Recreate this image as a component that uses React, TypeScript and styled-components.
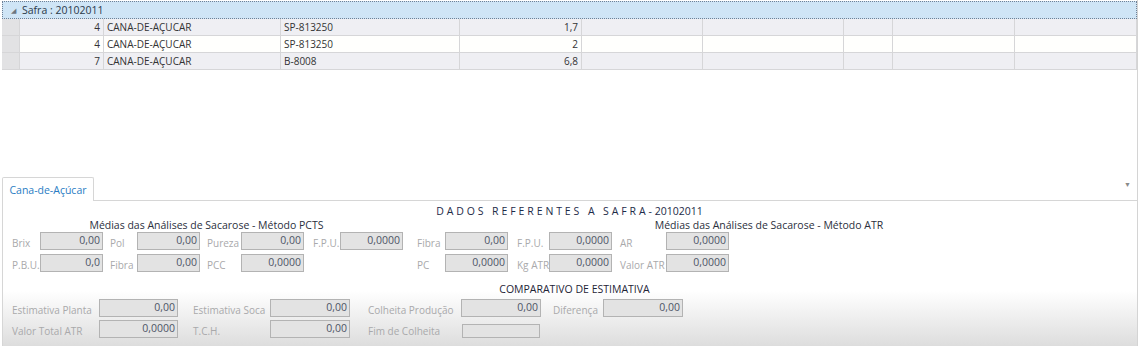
import React from 'react';
import styled, { createGlobalStyle } from 'styled-components';

const GlobalStyle = createGlobalStyle`
  html, body {
    margin: 0;
    padding: 0;
    background: #ffffff;
  }
  body {
    font-family: 'Open Sans', 'Noto Sans', sans-serif;
    font-size: 10px;
  }
`;

const Screen = styled.div`
  width: 1142px;
  height: 346px;
  display: flex;
  overflow: hidden;
  background: #ffffff;
`;

const Main = styled.div`
  width: 1137px;
  display: flex;
  flex-direction: column;
  border-right: 1px solid #d4d4d4;
`;

const Grid = styled.div`
  height: 174px;
  padding: 1px 0 0 2px;
  box-sizing: border-box;
`;

const GroupRow = styled.div`
  height: 16px;
  display: flex;
  align-items: center;
  gap: 6px;
  padding-left: 8px;
  background: #cfe5f6;
  border: 1px dotted #6f8196;
  font-size: 10.5px;
  color: #2b3a4a;
`;

const Caret = styled.span`
  font-size: 7px;
  color: #6d7680;
`;

const cols = '18px 84px 177px 179px 122px 121px 141px 49px 122px 1fr';

const Row = styled.div<{ $alt?: boolean }>`
  display: grid;
  grid-template-columns: ${cols};
  height: 17px;
  background: ${(p) => (p.$alt ? '#fffffd' : '#efeff3')};
  border-bottom: 1px solid #d6d6d8;
  box-sizing: border-box;
`;

const Indicator = styled.div`
  background: #e2e2e4;
  border-right: 1px solid #d6d6d8;
`;

const Cell = styled.div<{ $right?: boolean }>`
  display: flex;
  align-items: center;
  justify-content: ${(p) => (p.$right ? 'flex-end' : 'flex-start')};
  padding: 0 3px 0 3px;
  border-right: 1px solid #d6d6d8;
  font-size: 10px;
  color: #333333;
  white-space: nowrap;
  overflow: hidden;
`;

const TabStrip = styled.div`
  height: 27px;
  display: flex;
  align-items: flex-end;
  padding-left: 2px;
  position: relative;
`;

const Tab = styled.div`
  width: 92px;
  height: 24px;
  box-sizing: border-box;
  border: 1px solid #d6d6d6;
  border-bottom: none;
  border-radius: 2px 2px 0 0;
  background: #ffffff;
  display: flex;
  align-items: center;
  justify-content: center;
  color: #2a7dc4;
  font-size: 10.5px;
`;

const TabLine = styled.div`
  flex: 1;
  border-bottom: 1px solid #d6d6d6;
`;

const DropArrow = styled.span`
  position: absolute;
  right: 6px;
  top: 6px;
  font-size: 7px;
  color: #8a8a8a;
`;

const Panel = styled.div`
  flex: 1;
  margin-left: 2px;
  border-left: 1px solid #d6d6d6;
  background: linear-gradient(to bottom, #ffffff 0%, #ffffff 62%, #dddddd 100%);
  padding: 3px 0 0 9px;
  display: flex;
  flex-direction: column;
`;

const Heading = styled.div`
  text-align: center;
  color: #1d2b48;
  font-size: 10.5px;
  height: 14px;
  line-height: 14px;
  padding-right: 10px;
`;

const Spaced = styled.span`
  letter-spacing: 2.9px;
`;

const SubHeads = styled.div`
  display: flex;
  height: 14px;
  line-height: 14px;
  color: #2b2f3d;
  font-size: 10.5px;
`;

const SubHead = styled.div<{ $w: number }>`
  width: ${(p) => p.$w}px;
  text-align: center;
`;

const FormRow = styled.div<{ $cols: string; $mt: number }>`
  display: grid;
  grid-template-columns: ${(p) => p.$cols};
  margin-top: ${(p) => p.$mt}px;
  height: 18px;
`;

const Field = styled.div<{ $lw: number }>`
  display: grid;
  grid-template-columns: ${(p) => p.$lw}px auto;
  align-items: end;
`;

const Label = styled.span`
  color: #a9a9ab;
  font-size: 10px;
  line-height: 14px;
  white-space: nowrap;
`;

const Box = styled.div<{ $w: number; $h?: number }>`
  width: ${(p) => p.$w}px;
  height: ${(p) => p.$h ?? 18}px;
  box-sizing: border-box;
  background: #e3e3e3;
  border: 1px solid #b3b3b3;
  color: #4e5566;
  font-size: 10.5px;
  text-align: right;
  padding-right: 2px;
  line-height: 14px;
`;

const Section = styled.div`
  text-align: center;
  color: #1e2436;
  font-size: 10.5px;
  margin-top: 10px;
  height: 14px;
  line-height: 14px;
`;

type F = { l: string; v?: string; lw: number; bw: number; h?: number } | null;

const rowA: F[] = [
  { l: 'Brix', v: '0,00', lw: 28, bw: 63 },
  { l: 'Pol', v: '0,00', lw: 27, bw: 63 },
  { l: 'Pureza', v: '0,00', lw: 34, bw: 63 },
  { l: 'F.P.U.', v: '0,0000', lw: 27, bw: 63 },
  { l: 'Fibra', v: '0,00', lw: 28, bw: 63 },
  { l: 'F.P.U.', v: '0,0000', lw: 32, bw: 63 },
  { l: 'AR', v: '0,0000', lw: 46, bw: 63 },
];

const rowB: F[] = [
  { l: 'P.B.U.', v: '0,0', lw: 28, bw: 63 },
  { l: 'Fibra', v: '0,00', lw: 27, bw: 63 },
  { l: 'PCC', v: '0,0000', lw: 34, bw: 63 },
  null,
  { l: 'PC', v: '0,0000', lw: 28, bw: 63 },
  { l: 'Kg ATR', v: '0,0000', lw: 32, bw: 63 },
  { l: 'Valor ATR', v: '0,0000', lw: 46, bw: 63 },
];

const rowC: F[] = [
  { l: 'Estimativa Planta', v: '0,00', lw: 87, bw: 79 },
  { l: 'Estimativa Soca', v: '0,00', lw: 77, bw: 80 },
  { l: 'Colheita Produção', v: '0,00', lw: 93, bw: 80 },
  { l: 'Diferença', v: '0,00', lw: 50, bw: 80 },
];

const rowD: F[] = [
  { l: 'Valor Total ATR', v: '0,0000', lw: 87, bw: 79 },
  { l: 'T.C.H.', v: '0,00', lw: 77, bw: 80 },
  { l: 'Fim de Colheita', v: '', lw: 94, bw: 78, h: 14 },
  null,
];

const analysisCols = '98px 97px 106px 104px 100px 103px 120px';
const compareCols = '181px 175px 185px 140px';

const renderRow = (fields: F[]) =>
  fields.map((f, i) =>
    f ? (
      <Field key={i} $lw={f.lw}>
        <Label>{f.l}</Label>
        <Box $w={f.bw} $h={f.h}>{f.v}</Box>
      </Field>
    ) : (
      <div key={i} />
    )
  );

const rows = [
  { n: '4', cult: 'CANA-DE-AÇUCAR', var: 'SP-813250', v: '1,7' },
  { n: '4', cult: 'CANA-DE-AÇUCAR', var: 'SP-813250', v: '2' },
  { n: '7', cult: 'CANA-DE-AÇUCAR', var: 'B-8008', v: '6,8' },
];

const App: React.FC = () => (
  <>
    <GlobalStyle />
    <Screen>
      <Main>
        <Grid>
          <GroupRow>
            <Caret>◢</Caret>
            <span>Safra : 20102011</span>
          </GroupRow>
          {rows.map((r, i) => (
            <Row key={i} $alt={i === 1}>
              <Indicator />
              <Cell $right>{r.n}</Cell>
              <Cell>{r.cult}</Cell>
              <Cell>{r.var}</Cell>
              <Cell $right>{r.v}</Cell>
              <Cell />
              <Cell />
              <Cell />
              <Cell />
              <Cell />
            </Row>
          ))}
        </Grid>
        <TabStrip>
          <Tab>Cana-de-Açúcar</Tab>
          <TabLine />
          <DropArrow>▼</DropArrow>
        </TabStrip>
        <Panel>
          <Heading>
            <Spaced>DADOS REFERENTES A SAFRA-</Spaced>20102011
          </Heading>
          <SubHeads>
            <SubHead $w={391}>Médias das Análises de Sacarose - Método PCTS</SubHead>
            <SubHead $w={740}>Médias das Análises de Sacarose - Método ATR</SubHead>
          </SubHeads>
          <FormRow $cols={analysisCols} $mt={0}>{renderRow(rowA)}</FormRow>
          <FormRow $cols={analysisCols} $mt={4}>{renderRow(rowB)}</FormRow>
          <Section>COMPARATIVO DE ESTIMATIVA</Section>
          <FormRow $cols={compareCols} $mt={3}>{renderRow(rowC)}</FormRow>
          <FormRow $cols={compareCols} $mt={3}>{renderRow(rowD)}</FormRow>
        </Panel>
      </Main>
    </Screen>
  </>
);

export default App;
